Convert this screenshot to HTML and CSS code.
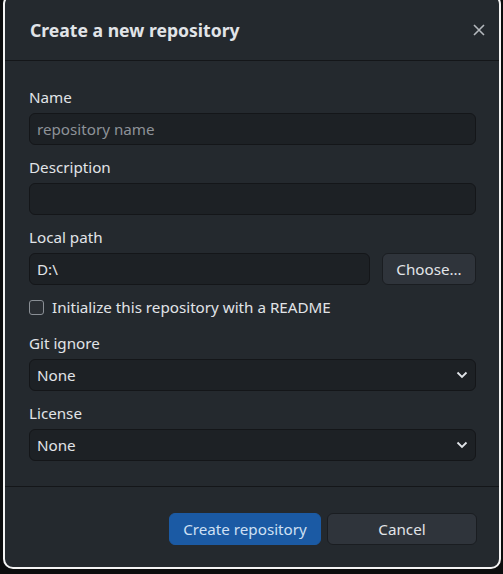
FILE: index.html
```html
<!DOCTYPE html>
<html>
<head>
<meta charset="utf-8">
<link rel="stylesheet" href="styles.css">
</head>
<body>
<div class="dialog">
  <div class="header">
    <h1 class="title">Create a new repository</h1>
    <button class="close" aria-label="Close">
      <svg width="12" height="12" viewBox="0 0 12 12"><path d="M1 1L11 11M11 1L1 11" stroke="#b4b8bd" stroke-width="1.6" fill="none"/></svg>
    </button>
  </div>
  <div class="body">
    <div class="field">
      <label class="label">Name</label>
      <div class="input"><span class="placeholder">repository name</span></div>
    </div>
    <div class="field">
      <label class="label">Description</label>
      <div class="input"></div>
    </div>
    <div class="field">
      <label class="label">Local path</label>
      <div class="path-row">
        <div class="input grow"><span class="value">D:\</span></div>
        <button class="btn choose">Choose...</button>
      </div>
    </div>
    <div class="check-row">
      <span class="checkbox"></span>
      <span class="check-label">Initialize this repository with a README</span>
    </div>
    <div class="field">
      <label class="label">Git ignore</label>
      <div class="input select"><span class="value">None</span>
        <svg class="chev" width="12" height="8" viewBox="0 0 12 8"><path d="M1.5 1.5L6 6L10.5 1.5" stroke="#e1e4e8" stroke-width="1.8" fill="none"/></svg>
      </div>
    </div>
    <div class="field last">
      <label class="label">License</label>
      <div class="input select"><span class="value">None</span>
        <svg class="chev" width="12" height="8" viewBox="0 0 12 8"><path d="M1.5 1.5L6 6L10.5 1.5" stroke="#e1e4e8" stroke-width="1.8" fill="none"/></svg>
      </div>
    </div>
  </div>
  <div class="footer">
    <button class="btn primary">Create repository</button>
    <button class="btn cancel">Cancel</button>
  </div>
</div>
</body>
</html>
```
FILE: styles.css
```css
* { box-sizing: border-box; }
html, body { margin: 0; padding: 0; }
body {
  background: #0b0c0d;
  font-family: "Noto Sans", "Open Sans", sans-serif;
  color: #e1e4e8;
  width: 503px;
  height: 574px;
  overflow: hidden;
}
.dialog {
  margin: -6px 0 0 3px;
  width: 498px;
  height: 575px;
  background: #24292e;
  border: 2px solid #f4f4f4;
  border-radius: 10px;
  display: flex;
  flex-direction: column;
}
.header {
  height: 65px;
  padding: 4px 12px 0 25px;
  display: flex;
  align-items: center;
  justify-content: space-between;
  border-bottom: 1px solid #141619;
}
.title {
  margin: 0;
  font-size: 17.6px;
  font-weight: 700;
  color: #e1e4e8;
}
.close {
  background: none;
  border: 0;
  padding: 0;
  width: 16px;
  height: 16px;
  display: flex;
  align-items: center;
  justify-content: center;
}
.body {
  padding: 26px 23px 25px 24px;
  border-bottom: 1px solid #141619;
}
.field { margin-bottom: 12px; }
.field.last { margin-bottom: 0; }
.label {
  display: block;
  font-size: 15.2px;
  line-height: 20px;
  margin-bottom: 6px;
  color: #e1e4e8;
}
.input {
  height: 32px;
  background: #1d2125;
  border: 1px solid #141619;
  border-radius: 6px;
  padding: 0 7px;
  display: flex;
  align-items: center;
  font-size: 15.2px;
}
.placeholder { color: #8d9298; }
.value { color: #e1e4e8; }
.path-row { display: flex; gap: 12px; }
.grow { flex: 1; }
.btn {
  font-family: inherit;
  font-size: 15.2px;
  height: 32px;
  border-radius: 6px;
  color: #e1e4e8;
  cursor: pointer;
  padding: 0;
}
.choose {
  width: 94px;
  background: #2f343b;
  border: 1px solid #1a1d21;
}
.check-row {
  display: flex;
  align-items: center;
  gap: 8px;
  height: 20px;
  margin: 12px 0 16px;
}
.checkbox {
  width: 15px;
  height: 15px;
  border: 1px solid #8a8f95;
  border-radius: 3px;
  background: #2a2e33;
}
.check-label { font-size: 15.2px; }
.select { justify-content: space-between; padding-right: 7px; }
.chev { display: block; }
.footer {
  flex: 1;
  display: flex;
  justify-content: flex-end;
  align-items: flex-start;
  gap: 6px;
  padding: 26px 22px 0 0;
}
.primary {
  width: 152px;
  background: #1b5aa4;
  border: 1px solid #1b5aa4;
  color: #cfe0f4;
}
.cancel {
  width: 150px;
  background: #2f343b;
  border: 1px solid #1a1d21;
}
```
